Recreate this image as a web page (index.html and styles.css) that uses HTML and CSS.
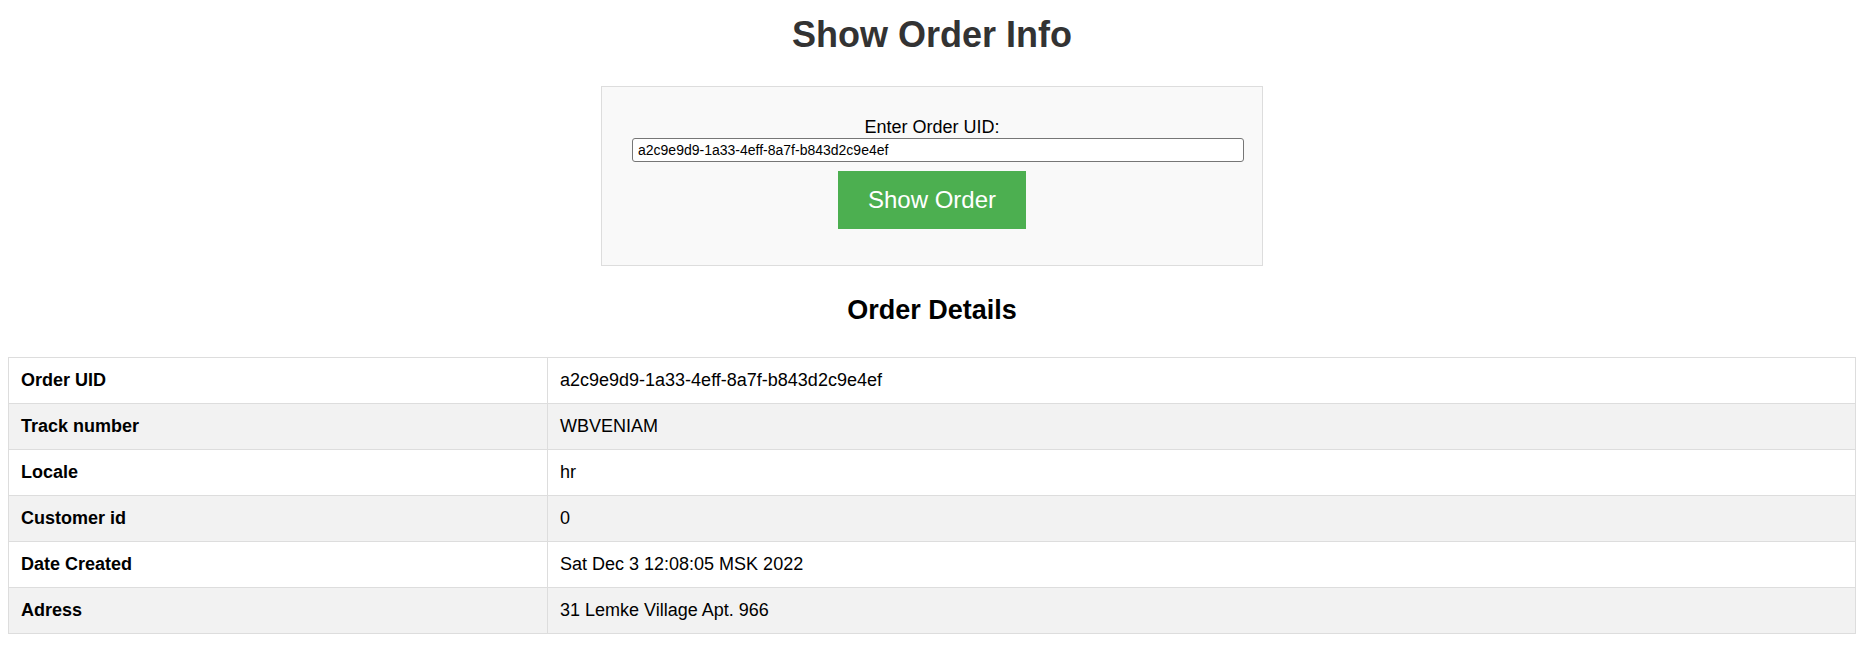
FILE: index.html
```html
<!DOCTYPE html>
<html lang="en">
<head>
<meta charset="utf-8">
<title>Show Order Info</title>
<link rel="stylesheet" href="styles.css">
</head>
<body>
<div class="page">
  <h1 class="title">Show Order Info</h1>
  <form class="lookup" onsubmit="return false;">
    <label class="lookup-label" for="uid">Enter Order UID:</label>
    <input class="lookup-input" id="uid" type="text" value="a2c9e9d9-1a33-4eff-8a7f-b843d2c9e4ef">
    <button class="lookup-button" type="submit">Show Order</button>
  </form>
  <h2 class="subtitle">Order Details</h2>
  <table class="details">
    <colgroup><col class="details-key"><col></colgroup>
    <tbody>
      <tr><th>Order UID</th><td>a2c9e9d9-1a33-4eff-8a7f-b843d2c9e4ef</td></tr>
      <tr><th>Track number</th><td>WBVENIAM</td></tr>
      <tr><th>Locale</th><td>hr</td></tr>
      <tr><th>Customer id</th><td>0</td></tr>
      <tr><th>Date Created</th><td>Sat Dec 3 12:08:05 MSK 2022</td></tr>
      <tr><th>Adress</th><td>31 Lemke Village Apt. 966</td></tr>
    </tbody>
  </table>
</div>
</body>
</html>
```

FILE: styles.css
```css
html, body {
  margin: 0;
  padding: 0;
  background: #ffffff;
}

body {
  font-family: "Liberation Sans", Arial, sans-serif;
  font-size: 18px;
  color: #000;
}

.page {
  padding: 14px 12px 0 8px;
}

.title {
  margin: 0;
  font-size: 36px;
  line-height: 41px;
  font-weight: bold;
  color: #333;
  text-align: center;
}

.lookup {
  width: 600px;
  margin: 31px auto 0;
  padding: 30px;
  background: #f9f9f9;
  border: 1px solid #ddd;
  display: flex;
  flex-direction: column;
  align-items: center;
}

.lookup-label {
  display: block;
  line-height: 21px;
  height: 21px;
  color: #000;
}

.lookup-input {
  align-self: stretch;
  box-sizing: content-box;
  width: 100%;
  height: 16px;
  margin: 0;
  padding: 3px 5px;
  border: 1px solid #767676;
  border-radius: 3px;
  background: #fff;
  font-family: "Liberation Sans", Arial, sans-serif;
  font-size: 14px;
  line-height: 16px;
  color: #000;
}

.lookup-button {
  margin: 9px 0 6px;
  padding: 15px 30px;
  border: none;
  border-radius: 0;
  background: #4caf50;
  color: #fff;
  font-family: "Liberation Sans", Arial, sans-serif;
  font-size: 24px;
  line-height: 28px;
  cursor: pointer;
}

.subtitle {
  margin: 29px 0 31px;
  font-size: 27px;
  line-height: 31px;
  font-weight: bold;
  text-align: center;
  color: #000;
}

.details {
  width: 100%;
  border-collapse: collapse;
  table-layout: fixed;
}

.details-key {
  width: 539px;
}

.details th,
.details td {
  border: 1px solid #ddd;
  padding: 12px;
  line-height: 21px;
  text-align: left;
  font-size: 18px;
}

.details th {
  font-weight: bold;
}

.details tr:nth-child(even) {
  background: #f2f2f2;
}
```
